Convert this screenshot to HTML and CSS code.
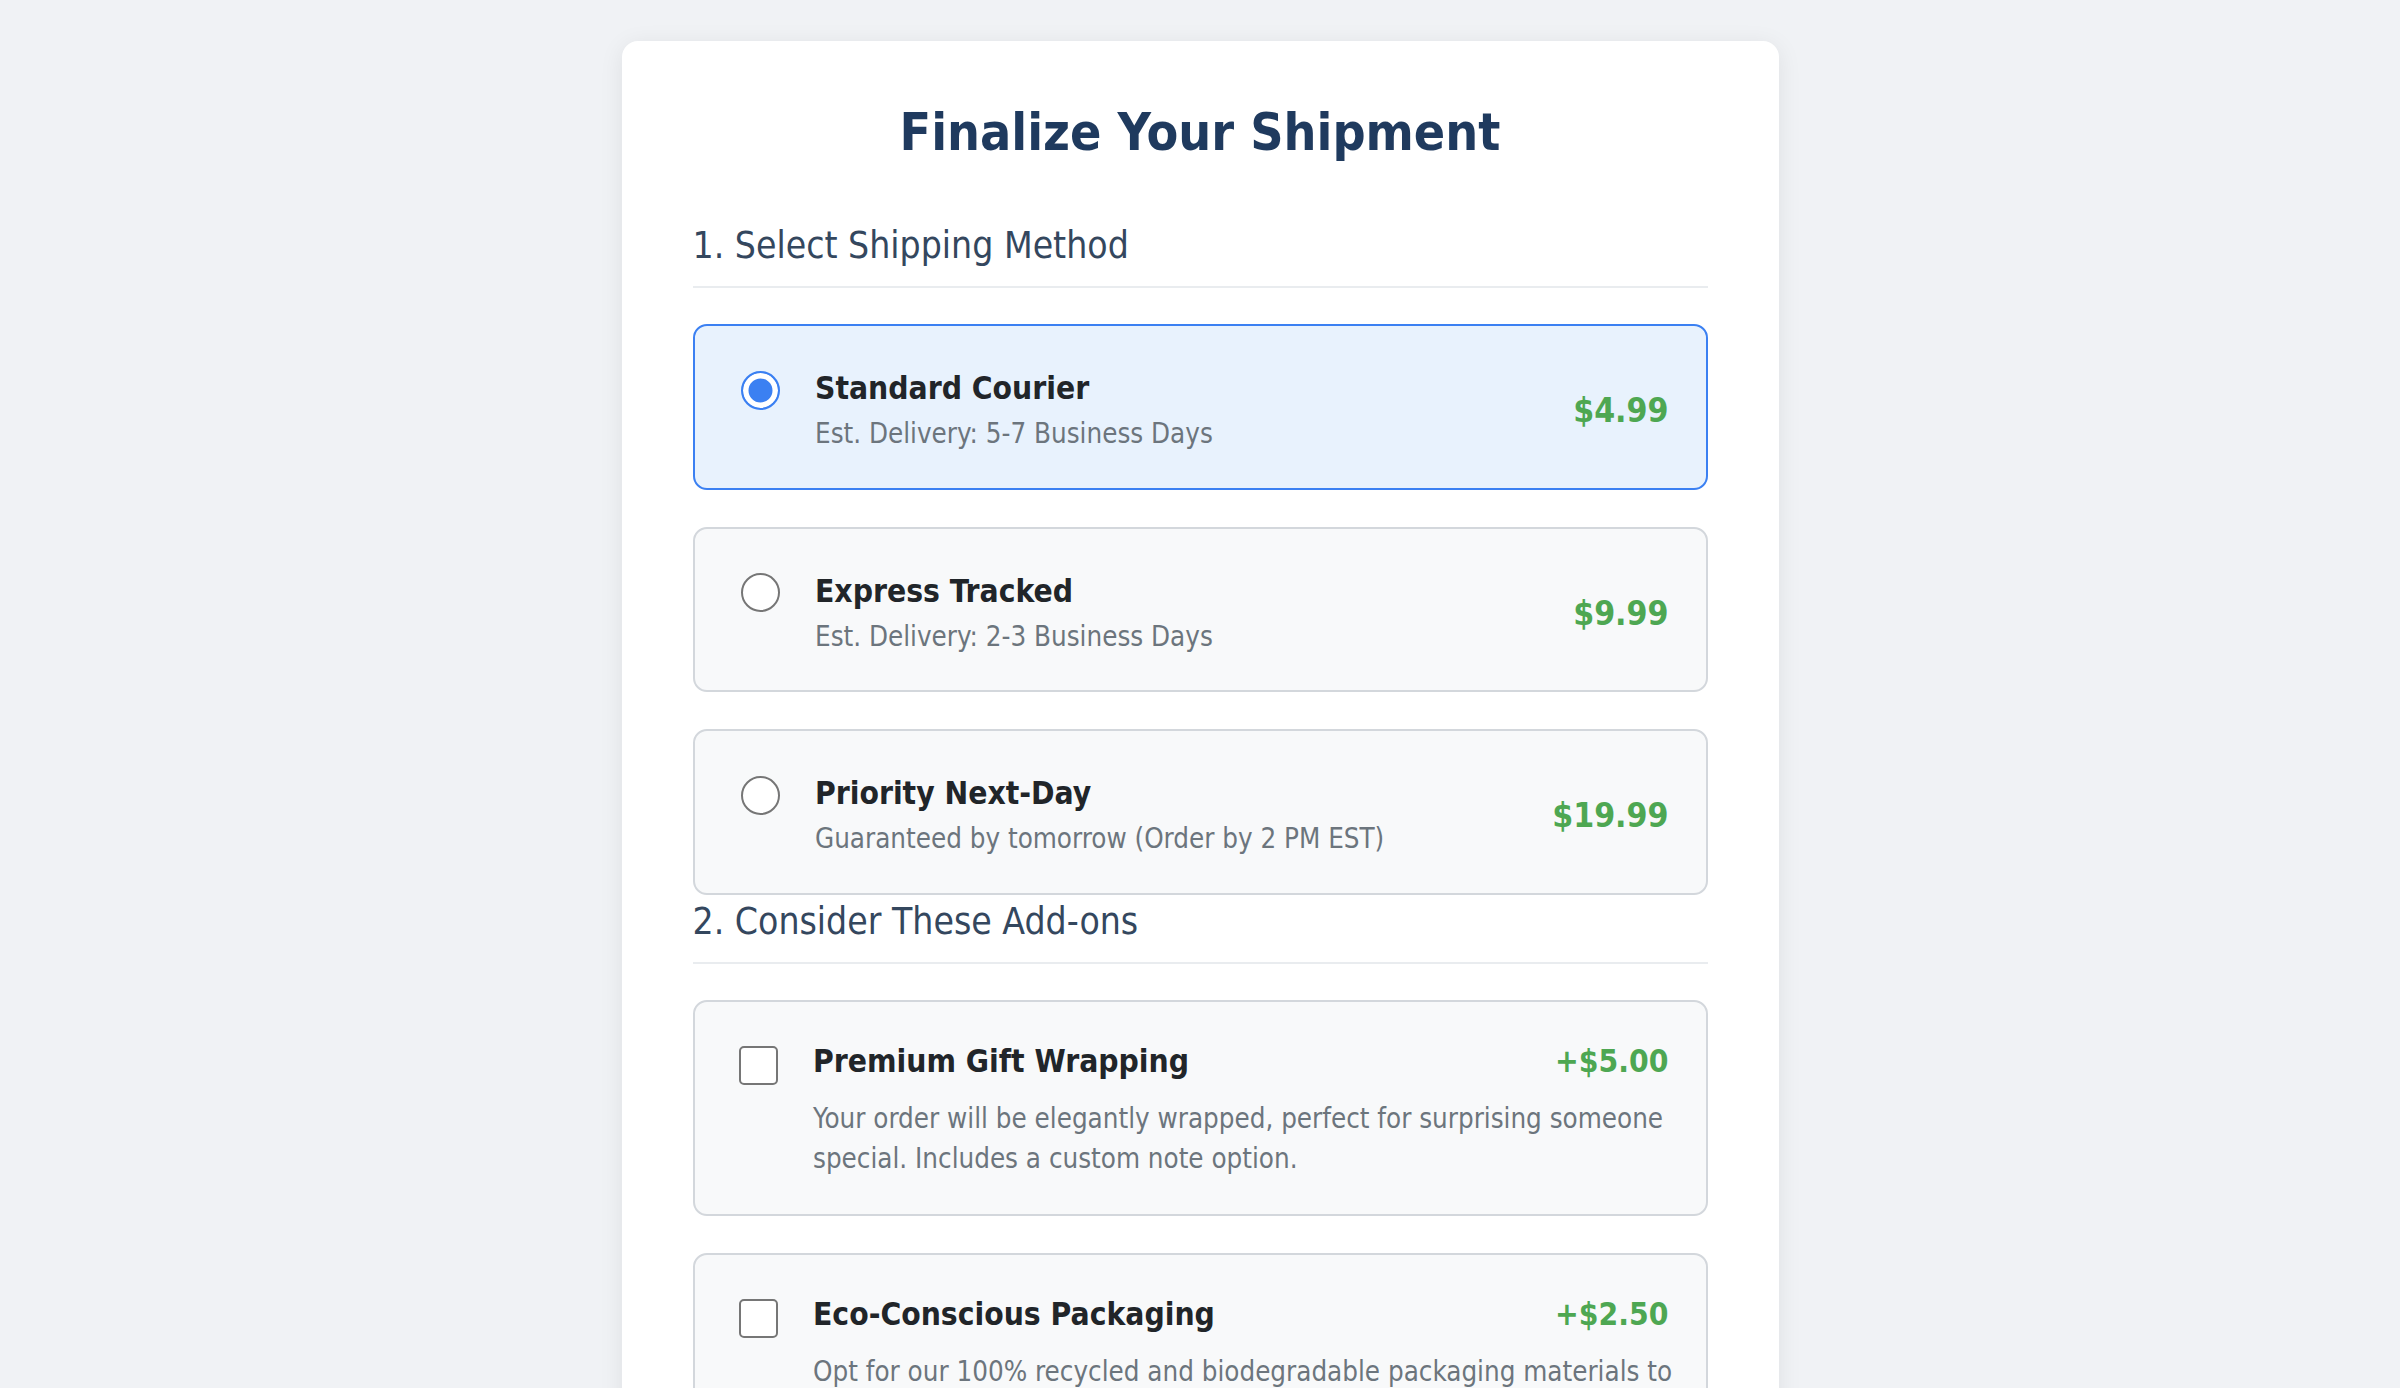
FILE: index.html
```html
<!DOCTYPE html>
<html lang="en">
<head>
<meta charset="utf-8">
<title>Finalize Your Shipment</title>
<link rel="stylesheet" href="styles.css">
</head>
<body>
<main class="card">
  <h1 class="title">Finalize Your Shipment</h1>

  <section class="section">
    <h2 class="section-title">1. Select Shipping Method</h2>
    <div class="options">
      <label class="option option--selected">
        <input class="radio" type="radio" name="ship" checked>
        <span class="option-info">
          <span class="option-name">Standard Courier</span>
          <span class="option-desc">Est. Delivery: 5-7 Business Days</span>
        </span>
        <span class="option-price">$4.99</span>
      </label>
      <label class="option">
        <input class="radio" type="radio" name="ship">
        <span class="option-info">
          <span class="option-name">Express Tracked</span>
          <span class="option-desc">Est. Delivery: 2-3 Business Days</span>
        </span>
        <span class="option-price">$9.99</span>
      </label>
      <label class="option">
        <input class="radio" type="radio" name="ship">
        <span class="option-info">
          <span class="option-name">Priority Next-Day</span>
          <span class="option-desc">Guaranteed by tomorrow (Order by 2 PM EST)</span>
        </span>
        <span class="option-price">$19.99</span>
      </label>
    </div>
  </section>

  <section class="section">
    <h2 class="section-title">2. Consider These Add-ons</h2>
    <div class="options">
      <label class="addon">
        <input class="checkbox" type="checkbox">
        <span class="addon-body">
          <span class="addon-head">
            <span class="addon-name">Premium Gift Wrapping</span>
            <span class="addon-price">+$5.00</span>
          </span>
          <span class="addon-desc">Your order will be elegantly wrapped, perfect for surprising someone special. Includes a custom note option.</span>
        </span>
      </label>
      <label class="addon">
        <input class="checkbox" type="checkbox">
        <span class="addon-body">
          <span class="addon-head">
            <span class="addon-name">Eco-Conscious Packaging</span>
            <span class="addon-price">+$2.50</span>
          </span>
          <span class="addon-desc">Opt for our 100% recycled and biodegradable packaging materials to reduce your environmental footprint.</span>
        </span>
      </label>
    </div>
  </section>
</main>
</body>
</html>
```
FILE: styles.css
```css
* { box-sizing: border-box; }

body {
  margin: 0;
  background: #f0f2f5;
  font-family: "DejaVu Sans Condensed", "DejaVu Sans", sans-serif;
  color: #212529;
}

.card {
  width: 1157px;
  margin: 41px auto;
  padding: 61px 71px 60px;
  background: #ffffff;
  border-radius: 16px;
  box-shadow: 0 4px 24px rgba(0, 0, 0, 0.08);
}

.title {
  margin: 0 0 62px;
  font-size: 51.5px;
  font-weight: 700;
  line-height: normal;
  text-align: center;
  color: #1f3a5e;
}

.section + .section { margin-top: 5px; }

.section-title {
  margin: 0 0 36px;
  padding-bottom: 19px;
  border-bottom: 2px solid #e9ecef;
  font-size: 37px;
  font-weight: 400;
  line-height: normal;
  color: #34475e;
}

.options {
  display: flex;
  flex-direction: column;
  gap: 37px;
}

.option,
.addon {
  display: flex;
  align-items: flex-start;
  padding: 36px 37px 36px 36px;
  background: #f8f9fa;
  border: 2px solid #d3d7dc;
  border-radius: 14px;
  cursor: pointer;
}

.option { padding-bottom: 33px; }

.option--selected {
  background: #e8f2fd;
  border-color: #3b80f2;
}

.radio,
.checkbox {
  appearance: none;
  -webkit-appearance: none;
  flex: none;
  width: 39px;
  height: 39px;
  margin: 8.5px 35px 0 10.5px;
  background: #ffffff;
  border: 2px solid #767676;
}

.radio { border-radius: 50%; }

.radio:checked {
  border: 2px solid #3b80f2;
  background: #3b80f2;
  box-shadow: inset 0 0 0 5.5px #ffffff;
}

.checkbox {
  margin-left: 8.5px;
  border-radius: 5px;
}

.option-info {
  flex: 1;
  display: flex;
  flex-direction: column;
  margin-top: 3px;
}

.option-name,
.addon-name {
  font-size: 31.5px;
  font-weight: 700;
  line-height: 1.5;
  color: #212529;
}

.option-desc {
  margin-top: 1px;
  font-size: 27.5px;
  line-height: 1.5;
  color: #6c757d;
}

.option-price {
  align-self: center;
  margin-top: 5px;
  font-size: 33.5px;
  font-weight: 700;
  line-height: normal;
  color: #4ea752;
}

.addon-body {
  flex: 1;
  display: flex;
  flex-direction: column;
}

.addon-head {
  display: flex;
  justify-content: space-between;
  align-items: center;
}

.addon-price {
  font-size: 31.5px;
  font-weight: 700;
  line-height: 1.5;
  color: #4ea752;
}

.addon-desc {
  margin-top: 13px;
  margin-right: -6px;
  font-size: 27.5px;
  line-height: 40px;
  color: #6c757d;
}
```
